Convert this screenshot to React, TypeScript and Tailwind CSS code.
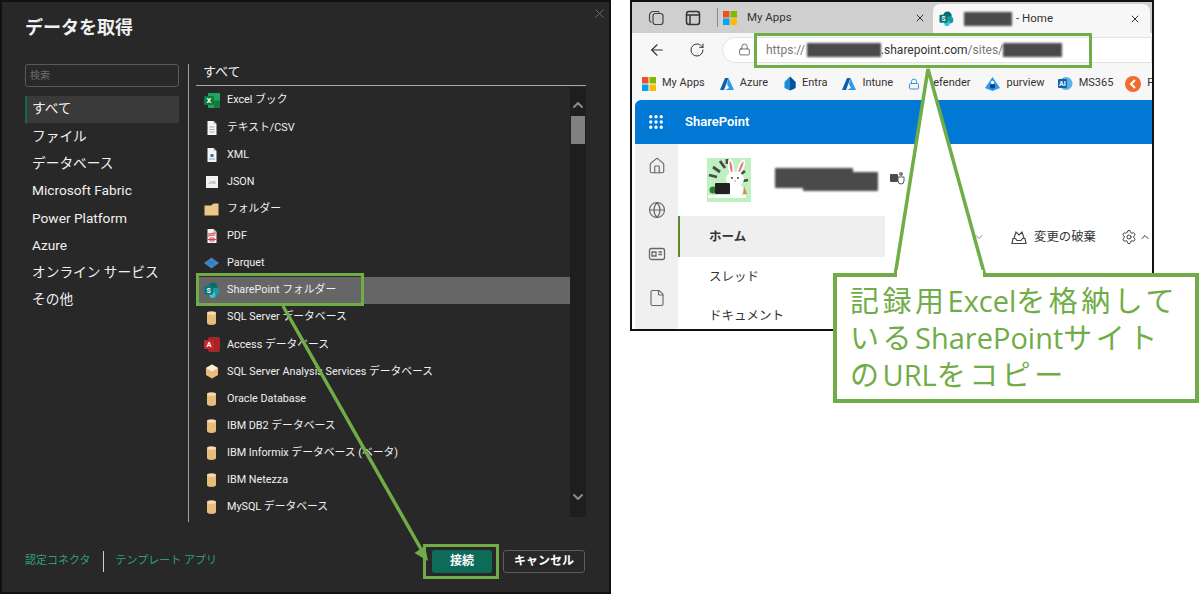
import { ArrowLeft, ChevronDown, ChevronUp, File, Globe, Grip, Home, Lock, RotateCw, Settings, X } from "lucide-react";
import type { ReactNode } from "react";

const font = "font-['Roboto','Noto_Sans_CJK_JP',sans-serif]";

const categories = ["すべて", "ファイル", "データベース", "Microsoft Fabric", "Power Platform", "Azure", "オンライン サービス", "その他"];

function Cylinder() {
  return (
    <svg width="13" height="16" viewBox="0 0 13 16">
      <path d="M2 3v10c0 1.2 2 2 4.500 2s4.500-.8 4.500-2V3z" fill="#e8bd7c" />
      <ellipse cx="6.500" cy="3" rx="4.500" ry="1.800" fill="#f6dcae" />
    </svg>
  );
}

function Page({ children }: { children?: ReactNode }) {
  return (
    <svg width="14" height="16" viewBox="0 0 14 16">
      <path d="M2.500 1h6l3 3v11h-9z" fill="#f4f4f4" />
      <path d="M8.500 1v3h3z" fill="#bdbdbd" />
      {children}
    </svg>
  );
}

function SharePointIcon({ size = 16 }: { size?: number }) {
  return (
    <svg width={size} height={size} viewBox="0 0 16 16">
      <circle cx="9" cy="5" r="4.500" fill="#036c70" />
      <circle cx="11.500" cy="9.500" r="3.800" fill="#1a9ba1" />
      <circle cx="8.500" cy="13" r="3" fill="#37c6d0" />
      <rect x="0.500" y="4" width="8.500" height="8.500" rx="1" fill="#03787c" />
      <text x="4.700" y="10.700" fontSize="7" fontWeight="700" fill="#fff" textAnchor="middle">S</text>
    </svg>
  );
}

const connectors: { label: string; icon: ReactNode }[] = [
  {
    label: "Excel ブック",
    icon: (
      <svg width="16" height="15" viewBox="0 0 16 15">
        <rect x="4" y="0" width="12" height="15" rx="1" fill="#21a366" />
        <rect x="10" y="7.500" width="6" height="7.500" fill="#107c41" />
        <rect x="0" y="3" width="10" height="9" rx="1" fill="#0f7b3f" />
        <text x="5" y="10.300" fontSize="7.500" fontWeight="700" fill="#fff" textAnchor="middle">X</text>
      </svg>
    ),
  },
  {
    label: "テキスト/CSV",
    icon: (
      <Page>
        <path d="M4.500 7h5M4.500 9.500h5M4.500 12h5" stroke="#999" strokeWidth="0.800" />
      </Page>
    ),
  },
  {
    label: "XML",
    icon: (
      <Page>
        <rect x="5.500" y="7" width="3" height="3" fill="#2f6fc4" />
        <path d="M4 12h6" stroke="#999" />
      </Page>
    ),
  },
  {
    label: "JSON",
    icon: (
      <svg width="14" height="14" viewBox="0 0 14 14">
        <rect x="1" y="1" width="12" height="12" fill="#f2f2f2" />
        <text x="7" y="8.800" fontSize="4" fill="#8a8a8a" textAnchor="middle">JSN</text>
      </svg>
    ),
  },
  {
    label: "フォルダー",
    icon: (
      <svg width="15" height="13" viewBox="0 0 15 13">
        <path d="M0.500 2.500 L7 2.500 L9.500 0.500 H14.500 V12.500 H0.500z" fill="#ebc789" />
      </svg>
    ),
  },
  {
    label: "PDF",
    icon: (
      <Page>
        <text x="7" y="8" fontSize="5" fontWeight="700" fill="#d13438" textAnchor="middle">pdf</text>
        <path d="M1 11.500h12M5 10h4v3H5z" stroke="#d13438" strokeWidth="0.900" fill="none" />
      </Page>
    ),
  },
  {
    label: "Parquet",
    icon: (
      <svg width="15" height="12" viewBox="0 0 15 12">
        <path d="M7.500 0.500 15 6l-7.500 5.500L0 6z" fill="#3f86c4" />
        <path d="M4 3.500l7 5M11 3.500l-7 5" stroke="#2c6a9e" strokeWidth="0.600" />
      </svg>
    ),
  },
  { label: "SharePoint フォルダー", icon: <SharePointIcon /> },
  { label: "SQL Server データベース", icon: <Cylinder /> },
  {
    label: "Access データベース",
    icon: (
      <svg width="16" height="15" viewBox="0 0 16 15">
        <rect x="4" y="0" width="12" height="15" rx="2" fill="#a4262c" />
        <rect x="0" y="3" width="10" height="9" rx="1" fill="#c4262e" />
        <text x="5" y="10.300" fontSize="7.500" fontWeight="700" fill="#fff" textAnchor="middle">A</text>
      </svg>
    ),
  },
  {
    label: "SQL Server Analysis Services データベース",
    icon: (
      <svg width="14" height="15" viewBox="0 0 14 15">
        <path d="M7 0.500 13 4v7l-6 3.500L1 11V4z" fill="#e8bd7c" />
        <path d="M7 0.500 13 4 7 7.500 1 4z" fill="#fbeed6" />
      </svg>
    ),
  },
  { label: "Oracle Database", icon: <Cylinder /> },
  { label: "IBM DB2 データベース", icon: <Cylinder /> },
  { label: "IBM Informix データベース (ベータ)", icon: <Cylinder /> },
  { label: "IBM Netezza", icon: <Cylinder /> },
  { label: "MySQL データベース", icon: <Cylinder /> },
];

function MsLogo() {
  return (
    <svg width="14" height="14" viewBox="0 0 14 14">
      <rect width="6.500" height="6.500" fill="#f25022" />
      <rect x="7.500" width="6.500" height="6.500" fill="#7fba00" />
      <rect y="7.500" width="6.500" height="6.500" fill="#00a4ef" />
      <rect x="7.500" y="7.500" width="6.500" height="6.500" fill="#ffb900" />
    </svg>
  );
}

function AzureMark() {
  return (
    <svg width="14" height="14" viewBox="0 0 14 14">
      <path d="M5 1h3.500L4 13H0z" fill="#0a5fb4" />
      <path d="M8.500 1 14 13H5l4-2-2-4z" fill="#2f9be8" />
    </svg>
  );
}

function Redact({ className }: { className: string }) {
  return <span className={`inline-block bg-[#4a4a4a] blur-[1px] ${className}`} />;
}

function SiteLogo() {
  return (
    <svg className="shrink-0" width="44" height="44" viewBox="0 0 44 44">
      <rect width="44" height="44" fill="#bff0bf" />
      <path d="M2 17l8 2M6 9l7 5M13 3l5 7M20 1v5M38 13l-4 3M41 22l-5 1" stroke="#4a4a4a" strokeWidth="2.800" />
      <ellipse cx="24" cy="9" rx="3" ry="8" fill="#fff" transform="rotate(-8 24 9)" />
      <ellipse cx="34" cy="9" rx="3" ry="8" fill="#fff" transform="rotate(22 34 9)" />
      <ellipse cx="24" cy="9" rx="1.200" ry="6" fill="#f0788c" transform="rotate(-8 24 9)" />
      <ellipse cx="34" cy="9" rx="1.200" ry="6" fill="#f0788c" transform="rotate(22 34 9)" />
      <ellipse cx="28" cy="21" rx="9" ry="7.500" fill="#fff" />
      <circle cx="25" cy="20" r="0.900" fill="#333" />
      <circle cx="31" cy="20" r="0.900" fill="#333" />
      <circle cx="28" cy="23" r="0.800" fill="#e8788c" />
      <ellipse cx="29" cy="32" rx="8" ry="6" fill="#fff" />
      <path d="M37 28l3 8h-4z" fill="#e8843c" />
      <circle cx="6" cy="32" r="3.500" fill="#2f7d32" />
      <rect x="8" y="25" width="15" height="11" rx="1" fill="#222" />
      <rect x="1" y="37" width="38" height="3" rx="1" fill="#fff" />
    </svg>
  );
}

function GetDataDialog() {
  return (
    <div className="relative flex h-[594px] w-[611px] shrink-0 flex-col border-2 border-[#111] bg-[#282828] text-[#f0f0f0]">
      <X className="absolute left-[590px] top-[4px] h-[15px] w-[15px] text-[#6e6e6e]" strokeWidth={1.500} />
      <div className="h-[62px] pl-[23px] pt-[12px] text-[18px] font-bold leading-[28px]">データを取得</div>
      <div className="flex h-[458px]">
        <div className="ml-[23px] w-[154px]">
          <div className="flex h-[23px] items-center rounded-[3px] border border-[#5a5a5a] px-[4px] pb-[1px] text-[10px] text-[#6c6c6c]">検索</div>
          <div className="mt-[9px]">
            {categories.map((name, i) => (
              <div
                key={name}
                className={
                  i === 0
                    ? "flex h-[27.300px] items-center border-l-2 border-[#0e6b58] bg-[#3a3a3a] pb-[3px] pl-[5px] text-[13.700px]"
                    : "flex h-[27.300px] items-center pb-[2px] pl-[7px] text-[13.700px]"
                }
              >
                {name}
              </div>
            ))}
          </div>
        </div>
        <div className="ml-[9px] w-px bg-[#a0a0a0]" />
        <div className="ml-[7px] w-[390px]">
          <div className="flex h-[22px] items-start border-b border-[#a8a8a8] pl-[7px] text-[13px] leading-[16px]">すべて</div>
          <div className="flex">
            <div className="w-[374px] pt-px">
              {connectors.map((c) => (
                <div
                  key={c.label}
                  className={
                    c.label === "SharePoint フォルダー"
                      ? "flex h-[27.130px] items-center bg-[#666666] text-[10.800px]"
                      : "flex h-[27.130px] items-center text-[10.800px]"
                  }
                >
                  <span className="flex w-[31px] shrink-0 justify-center">{c.icon}</span>
                  {c.label}
                </div>
              ))}
            </div>
            <div className="mt-px flex h-[430px] w-[16px] flex-col items-center bg-[#1e1e1e]">
              <ChevronUp className="mt-[10px] h-[16px] w-[16px] text-[#8a8a8a]" strokeWidth={3} />
              <div className="mt-[3px] h-[28px] w-[14px] bg-[#808080]" />
              <ChevronDown className="mt-auto mb-[12px] h-[16px] w-[16px] text-[#8a8a8a]" strokeWidth={3} />
            </div>
          </div>
        </div>
      </div>
      <div className="flex flex-1 items-center pl-[23px] pt-[8px] text-[11px]">
        <span className="text-[#2f9d86]">認定コネクタ</span>
        <span className="mx-[12px] h-[21px] w-px bg-[#cfcfcf]" />
        <span className="text-[#2f9d86]">テンプレート アプリ</span>
        <div className="ml-auto mr-[24px] flex gap-[11px] text-[12px] font-bold">
          <button className="flex h-[23px] w-[60px] items-center justify-center rounded-[3px] bg-[#0e6b58] text-white">接続</button>
          <button className="flex h-[23px] w-[82px] items-center justify-center rounded-[3px] border border-[#5c5c5c] text-white">キャンセル</button>
        </div>
      </div>
    </div>
  );
}

function BrowserCapture() {
  const bookmarks: { label: string; icon: ReactNode; gap: string }[] = [
    { label: "My Apps", icon: <MsLogo />, gap: "ml-[10px]" },
    { label: "Azure", icon: <AzureMark />, gap: "ml-[15px]" },
    {
      label: "Entra",
      icon: (
        <svg width="12" height="15" viewBox="0 0 12 15">
          <path d="M6 0.500 11.500 6v6L6 14.500.5 12V6z" fill="#1c8ad8" />
          <path d="M6 0.500 11.500 6v6L6 14.500z" fill="#0a4f9c" />
        </svg>
      ),
      gap: "ml-[16px]",
    },
    { label: "Intune", icon: <AzureMark />, gap: "ml-[15px]" },
    { label: "Defender", icon: <Lock className="h-[12px] w-[12px] text-[#3d8fe0]" />, gap: "ml-[15px]" },
    {
      label: "purview",
      icon: (
        <svg width="15" height="14" viewBox="0 0 15 14">
          <path d="M7.500 0 15 11 7.500 14 0 11z" fill="#2a9bea" />
          <circle cx="7.500" cy="9" r="2.500" fill="#0c3f8a" />
          <circle cx="7.500" cy="5.500" r="1.800" fill="#fff" />
        </svg>
      ),
      gap: "ml-[15px]",
    },
    {
      label: "MS365",
      icon: (
        <svg width="15" height="15" viewBox="0 0 15 15">
          <circle cx="8" cy="7.500" r="6.500" fill="#54b4e8" />
          <rect x="0" y="3" width="9" height="9" rx="1" fill="#0f5fb5" />
          <text x="4.500" y="10" fontSize="7" fontWeight="700" fill="#fff" textAnchor="middle">AI</text>
        </svg>
      ),
      gap: "ml-[13px]",
    },
    {
      label: "P",
      icon: (
        <svg width="16" height="16" viewBox="0 0 16 16">
          <circle cx="8" cy="8" r="8" fill="#f26a2e" />
          <path d="M10 4 6 8l4 4" stroke="#fff" strokeWidth="2" fill="none" />
        </svg>
      ),
      gap: "ml-[12px]",
    },
  ];

  return (
    <div className="ml-[19px] flex h-[331px] w-[524px] shrink-0 flex-col overflow-hidden border-2 border-[#111] bg-white text-[#333]">
      <div className="flex h-[31px] shrink-0 items-center bg-[#cfcfcf] pl-[16px]">
        <svg width="16" height="16" viewBox="0 0 16 16" fill="none" stroke="#444" strokeWidth="1.200">
          <rect x="5" y="3.500" width="10" height="11" rx="2.500" />
          <path d="M3.500 12.500a3 3 0 0 1-2-2.800V5.500a4 4 0 0 1 4-4h4a2.500 2.500 0 0 1 2 1" />
        </svg>
        <svg className="ml-[21px]" width="16" height="16" viewBox="0 0 16 16" fill="none" stroke="#333" strokeWidth="1.500">
          <rect x="1.500" y="1.500" width="13" height="13" rx="2.500" />
          <path d="M1.500 5h13M5 5v9.500" />
        </svg>
        <span className="ml-[16px] h-[19px] w-px bg-[#8a8a8a]" />
        <span className="ml-[5px]"><MsLogo /></span>
        <span className="ml-[10px] w-[167px] text-[11.500px]">My Apps</span>
        <X className="h-[12px] w-[12px]" strokeWidth={2} />
        <div className="ml-[7px] flex h-[29px] w-[217px] items-center self-end rounded-t-[7px] bg-[#f7f7f7] pl-[6px] text-[11.500px]">
          <SharePointIcon size={15} />
          <Redact className="ml-[10px] h-[14px] w-[48px]" />
          <span className="ml-[4px]">- Home</span>
          <X className="ml-auto mr-[9px] h-[12px] w-[12px]" strokeWidth={2} />
        </div>
      </div>
      <div className="flex h-[33px] shrink-0 items-center bg-[#f7f7f7] pl-[16px]">
        <ArrowLeft className="h-[18px] w-[18px]" strokeWidth={1.500} />
        <RotateCw className="ml-[23px] h-[16px] w-[16px]" strokeWidth={1.500} />
        <div className="ml-[17px] flex h-[26px] flex-1 items-center rounded-l-full border border-[#e2e2e2] bg-white pl-[15px] text-[12px]">
          <Lock className="h-[13px] w-[13px] text-[#555]" strokeWidth={1.500} />
          <span className="ml-[15px] text-[#777]">https://</span>
          <Redact className="ml-[2px] h-[14px] w-[74px]" />
          <span>.sharepoint.com</span>
          <span className="text-[#777]">/sites/</span>
          <Redact className="h-[14px] w-[59px]" />
        </div>
      </div>
      <div className="flex h-[34px] shrink-0 items-center whitespace-nowrap bg-[#f7f7f7] pt-px text-[11px]">
        {bookmarks.map((b) => (
          <span key={b.label} className={`flex shrink-0 items-center gap-[6px] ${b.gap}`}>
            {b.icon}
            {b.label}
          </span>
        ))}
      </div>
      <div className="ml-[3px] flex h-[44px] shrink-0 items-center rounded-tl-[6px] bg-[#0078d4] pl-[12px] text-white">
        <Grip className="h-[18px] w-[18px]" strokeWidth={2.500} />
        <span className="ml-[20px] text-[13px] font-semibold">SharePoint</span>
      </div>
      <div className="ml-[3px] flex flex-1">
        <div className="flex w-[43px] flex-col items-center gap-[26px] bg-[#f0f0f0] pt-[13px] text-[#666]">
          <Home className="h-[18px] w-[18px]" strokeWidth={1.500} />
          <Globe className="h-[18px] w-[18px]" strokeWidth={1.500} />
          <svg width="18" height="18" viewBox="0 0 18 18" fill="none" stroke="#666" strokeWidth="1.300">
            <rect x="1.500" y="3.500" width="15" height="11" rx="2" />
            <path d="M4 7h4v4H4zM10.500 7h3.500M10.500 9.500h3.500" />
          </svg>
          <File className="h-[18px] w-[18px]" strokeWidth={1.500} />
        </div>
        <div className="w-[207px] shrink-0">
          <div className="flex h-[72px] items-start pl-[29px] pt-[14px]">
            <SiteLogo />
            <span className="relative ml-[24px] mt-[10px] h-[23px] w-[103px] shrink-0">
              <Redact className="absolute left-0 top-0 h-[20px] w-[78px]" />
              <Redact className="absolute left-[28px] top-[4px] h-[19px] w-[75px]" />
            </span>
            <svg className="ml-[12px] mt-[13px] shrink-0" width="15" height="14" viewBox="0 0 15 14">
              <rect x="0" y="3" width="8" height="8" rx="1" fill="#4b4b4b" />
              <circle cx="11" cy="3" r="2" fill="#777" />
              <path d="M8 6h6v4a3 3 0 0 1-6 0z" fill="none" stroke="#555" />
            </svg>
          </div>
          <div className="flex h-[41px] items-center border-l-2 border-[#5a8a2c] bg-[#efefef] pl-[29px] pt-px text-[12.500px] font-bold">ホーム</div>
          <div className="flex h-[39px] items-center pl-[31px] pt-px text-[12.500px]">スレッド</div>
          <div className="flex h-[39px] items-center pl-[31px] pt-px text-[12.500px]">ドキュメント</div>
        </div>
        <div className="flex h-[42px] flex-1 items-center pt-[93px] text-[12.400px]">
          <ChevronDown className="ml-[88px] h-[12px] w-[12px] shrink-0 text-[#888]" />
          <svg className="ml-[26px] shrink-0" width="16" height="15" viewBox="0 0 16 15" fill="none" stroke="#444" strokeWidth="1.200">
            <path d="M1 13.500h14l-1-5h-2.500l-1.500 2H6l-1.500-2H2zM3 8l2-6 3 3 3-3 2 6" />
          </svg>
          <span className="ml-[7px] shrink-0">変更の破棄</span>
          <Settings className="ml-[25px] h-[16px] w-[16px] shrink-0" strokeWidth={1.400} />
          <ChevronUp className="ml-[2px] h-[12px] w-[12px] shrink-0" />
        </div>
      </div>
    </div>
  );
}

export default function App() {
  return (
    <div className={`relative flex h-[594px] w-[1200px] overflow-hidden bg-white ${font}`}>
      <GetDataDialog />
      <BrowserCapture />

      {/* annotations on top of the two screenshots */}
      <div className="absolute left-[196px] top-[273px] h-[33px] w-[168px] border-[3px] border-[#70ad47]" />
      <div className="absolute left-[423px] top-[544px] h-[35px] w-[76px] border-[3px] border-[#70ad47]" />
      <div className="absolute left-[754px] top-[33px] h-[35px] w-[338px] border-[3px] border-[#70ad47]" />
      <svg className="absolute left-0 top-0" width="1200" height="594" viewBox="0 0 1200 594">
        <path d="M283 306 421 549" stroke="#70ad47" strokeWidth="3.500" fill="none" />
        <path d="M428 561 414.500 553 425 546z" fill="#70ad47" />
        <path d="M895 276 928 69 985 276" fill="#fff" stroke="#70ad47" strokeWidth="3.500" />
      </svg>
      <div className="absolute left-[833px] top-[273px] flex h-[130px] w-[366px] flex-col justify-center whitespace-nowrap border-[4px] border-[#70ad47] bg-white pb-[1px] pl-[13px] text-[29px] leading-[37px] text-[#70ad47] font-['Open_Sans','Noto_Sans_CJK_JP',sans-serif]">
        <div>
          <span className="tracking-[3.500px]">記録用</span>Excel<span className="tracking-[3.500px]">を格納して</span>
        </div>
        <div>
          <span className="tracking-[3.500px]">いる</span>SharePoint<span className="tracking-[3.500px]">サイト</span>
        </div>
        <div>
          <span className="tracking-[3.500px]">の</span>URL<span className="tracking-[3.500px]">をコピー</span>
        </div>
      </div>
      <div className="absolute left-[897px] top-[270px] h-[8px] w-[86px] bg-white" />
    </div>
  );
}
